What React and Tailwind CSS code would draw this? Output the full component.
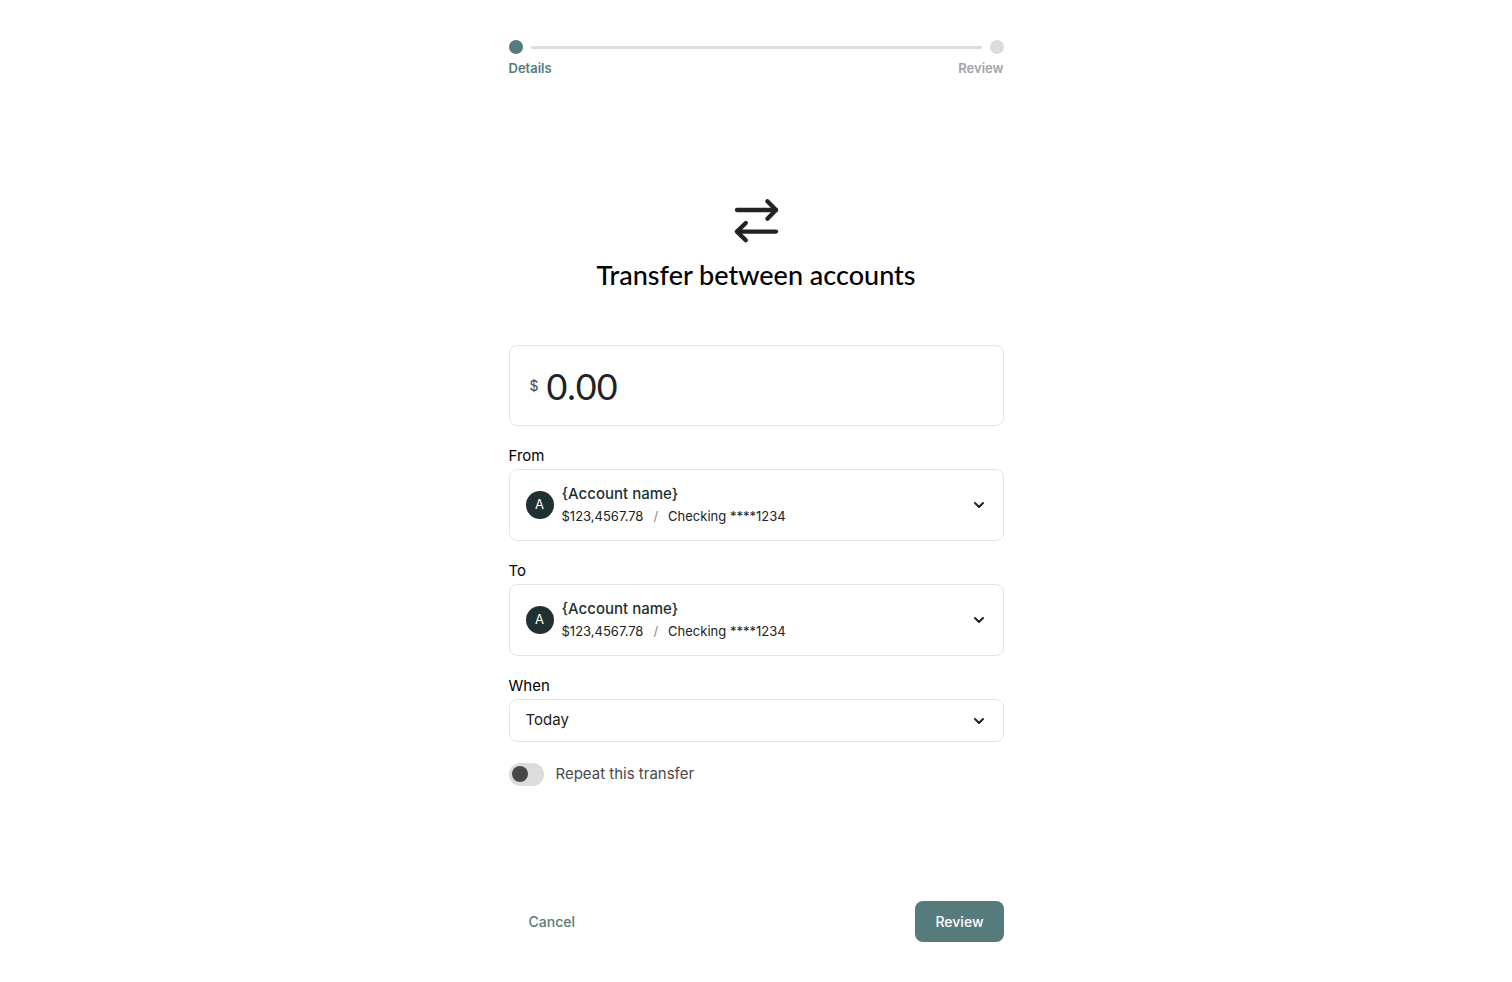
import { useState } from "react";

const ACCOUNTS = [
  { id: "a1", initial: "A", name: "{Account name}", balance: "$123,4567.78", type: "Checking ****1234" },
];

function Chevron() {
  return (
    <svg width="12" height="8" viewBox="0 0 12 8" fill="none" aria-hidden="true">
      <path d="M2 2L6 6L10 2" stroke="#1f2122" strokeWidth="2" strokeLinecap="round" strokeLinejoin="round" />
    </svg>
  );
}

function TransferIcon() {
  return (
    <svg width="48" height="48" viewBox="0 0 48 48" fill="none" aria-hidden="true">
      <g stroke="#222222" strokeWidth="4.3" strokeLinecap="round" strokeLinejoin="round">
        <path d="M5 13H44" />
        <path d="M35.4 4.2L44 13L35.4 21.8" />
        <path d="M44 34.6H5" />
        <path d="M13.8 26L5 34.6L13.8 43.2" />
      </g>
    </svg>
  );
}

function Stepper() {
  return (
    <div>
      <div className="flex items-center gap-2">
        <span className="size-3.5 rounded-full bg-[#567b7d]" />
        <span className="h-[3px] flex-1 rounded-full bg-[#dcdcdc]" />
        <span className="size-3.5 rounded-full bg-[#dcdcdc]" />
      </div>
      <div className="mt-1 flex justify-between text-[13px] leading-5 font-semibold">
        <span className="text-[#567b7d]">Details</span>
        <span className="text-[#a0a4a7]">Review</span>
      </div>
    </div>
  );
}

function AccountField({ id, label }) {
  const [selected, setSelected] = useState("a1");
  const account = ACCOUNTS.find((a) => a.id === selected);

  return (
    <div className="flex flex-col gap-1">
      <label htmlFor={id} className="text-[15px] leading-[19px] text-black">{label}</label>
      <div className="relative flex h-18 items-center gap-2 rounded-lg border border-[#e4e4e4] px-4 focus-within:border-[#567b7d]">
        <span className="flex size-7 items-center justify-center rounded-full bg-[#213133] text-[13px] text-white">
          {account.initial}
        </span>
        <div className="flex-1 leading-[22px]">
          <div className="text-[15px] font-medium text-[#213133]">{account.name}</div>
          <div className="flex gap-2.5 text-[13px] text-[#222222]">
            <span>{account.balance}</span>
            <span className="text-[#8a8a8a]">/</span>
            <span>{account.type}</span>
          </div>
        </div>
        <span className="px-0.5">
          <Chevron />
        </span>
        {/* Native select covers the card, so the whole card opens it */}
        <select
          id={id}
          value={selected}
          onChange={(e) => setSelected(e.target.value)}
          className="absolute inset-0 w-full cursor-pointer opacity-0"
        >
          {ACCOUNTS.map((a) => (
            <option key={a.id} value={a.id}>{a.name}</option>
          ))}
        </select>
      </div>
    </div>
  );
}

export default function App() {
  const [amount, setAmount] = useState("0.00");
  const [repeat, setRepeat] = useState(false);

  return (
    <div className="min-h-screen bg-white font-['Inter',sans-serif]">
      <form
        className="mx-auto flex min-h-screen w-full max-w-[495px] flex-col py-10"
        onSubmit={(e) => e.preventDefault()}
      >
        <Stepper />

        <main className="flex flex-1 flex-col justify-center pt-1">
          <div className="flex flex-col items-center gap-2.5">
            <TransferIcon />
            <h1 className="font-['Lato',sans-serif] text-[27px] leading-10 font-medium text-black">
              Transfer between accounts
            </h1>
          </div>

          <div className="mt-[50px] flex flex-col gap-5">
            {/* Amount */}
            <div className="flex h-[81px] items-center gap-2 rounded-lg border border-[#e4e4e4] px-5 focus-within:border-[#567b7d]">
              <label htmlFor="amount" className="text-sm text-[#444444]">$</label>
              <input
                id="amount"
                aria-label="Amount"
                inputMode="decimal"
                value={amount}
                onChange={(e) => setAmount(e.target.value)}
                className="h-14 w-full min-w-0 flex-1 bg-transparent font-['Lato',sans-serif] text-4xl text-[#222222] outline-none"
              />
            </div>

            <AccountField id="from" label="From" />
            <AccountField id="to" label="To" />

            <div className="flex flex-col gap-1">
              <label htmlFor="when" className="text-[15px] leading-[19px] text-black">When</label>
              <div className="relative">
                <select
                  id="when"
                  className="block h-[43px] w-full appearance-none rounded-lg border border-[#e4e4e4] bg-white px-4 text-[15px] text-[#222222] outline-none focus:border-[#567b7d]"
                >
                  <option>Today</option>
                </select>
                <span className="pointer-events-none absolute inset-y-0 right-[17px] flex items-center px-0.5">
                  <Chevron />
                </span>
              </div>
            </div>

            <label className="flex items-center gap-3 text-[15px] leading-6 text-[#4a4a4a]">
              <input
                type="checkbox"
                role="switch"
                checked={repeat}
                onChange={(e) => setRepeat(e.target.checked)}
                className="flex h-[23px] w-[35px] appearance-none items-center rounded-full bg-[#dcdcdc] px-[3px] before:size-4 before:rounded-full before:bg-[#484848] checked:justify-end checked:bg-[#567b7d] checked:before:bg-white"
              />
              Repeat this transfer
            </label>
          </div>
        </main>

        <footer className="flex items-center justify-between">
          <button type="button" className="h-[41px] rounded-lg px-5 text-sm font-medium text-[#567b7d]">
            Cancel
          </button>
          <button type="submit" className="h-[41px] rounded-lg bg-[#567b7d] px-5 text-sm font-medium text-white">
            Review
          </button>
        </footer>
      </form>
    </div>
  );
}
